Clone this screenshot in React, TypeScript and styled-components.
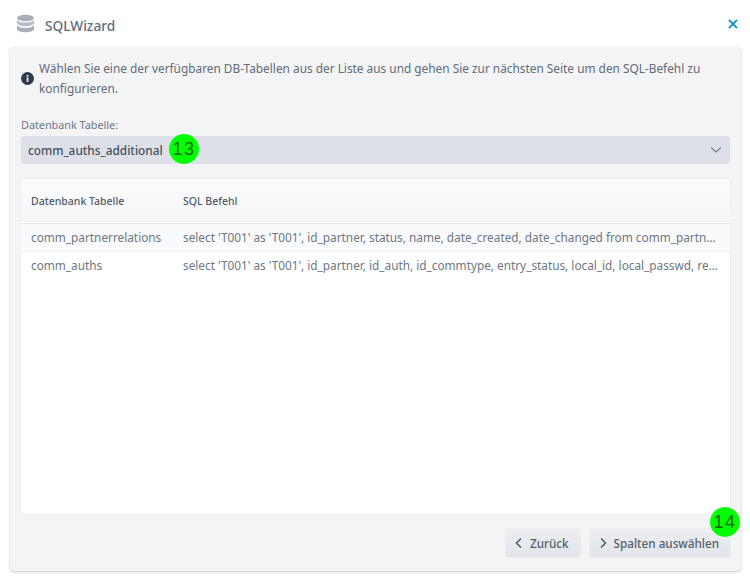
import React from "react";
import styled, { createGlobalStyle } from "styled-components";

const Global = createGlobalStyle`
  html, body { margin: 0; padding: 0; background: #fff; }
  body { font-family: "Noto Sans", "Open Sans", sans-serif; color: #4b5563; }
`;
const Page = styled.div`
  width: 750px; height: 576px; display: flex; flex-direction: column; overflow: hidden; box-sizing: border-box; position: relative;
`;
const Header = styled.header`
  height: 47px; display: flex; align-items: center; padding: 2px 11px 0 16px; box-sizing: border-box; flex: none;
`;
const AppIcon = styled.svg`
  width: 19px; height: 20px; flex: none; margin-top: -2px;
`;
const Title = styled.h1`
  margin: 1px 0 0 10px; font-size: 13.7px; font-weight: 500; color: #626b79; flex: 1;
`;
const CloseBtn = styled.button`
  border: 0; background: none; padding: 0; width: 12px; height: 12px; display: flex; color: #1a93c4; margin-top: -2px;
`;
const Panel = styled.main`
  margin: 0 9px 0 10px; height: 524px; background: #f3f4f6; border-radius: 4px;
  box-shadow: 0 1px 3px rgba(0,0,0,.22); padding: 11px 11px 14px; box-sizing: border-box; display: flex; flex-direction: column;
`;
const Info = styled.div`
  display: flex; align-items: center; gap: 5px; font-size: 11.85px; line-height: 20px; color: #626b78;
`;
const InfoIcon = styled.svg`
  width: 13px; height: 13px; flex: none; margin-top: 1px;
`;
const FieldLabel = styled.label`
  display: block; margin-top: 19px; font-size: 10.8px; line-height: 15px; color: #6d7686;
`;
const Select = styled.div`
  margin-top: 4px; height: 28px; background: #dde1e7; border-radius: 4px; display: flex; align-items: center; justify-content: space-between;
  padding: 0 8px 0 7px; font-size: 11.85px; font-weight: 500; color: #465060; flex: none;
`;
const SelectChevron = styled.span`
  display: flex; color: #7b8491;
`;
const TableCard = styled.div`
  margin-top: 15px; height: 335px; background: #fff; border-radius: 4px; box-shadow: 0 0 2px rgba(0,0,0,.08); overflow: hidden; flex: none;
`;
const Table = styled.table`
  width: 100%; border-collapse: collapse; table-layout: fixed; font-size: 11.8px;
`;
const HeadRow = styled.tr`
  height: 44px; background: linear-gradient(#fcfcfd, #f5f6f8); border-bottom: 1px solid #e5e7eb;
`;
const Th = styled.th<{ $w?: number }>`
  ${p => (p.$w ? `width: ${p.$w}px;` : "")}
  font-weight: 500; font-size: 10.5px; text-align: left; padding: 0 10px; color: #525b69;
`;
const Row = styled.tr<{ $alt?: boolean }>`
  height: 28px; background: ${p => (p.$alt ? "#f9fafb" : "#fff")}; border-bottom: ${p => (p.$alt ? "1px solid #eef0f2" : "0")};
`;
const Td = styled.td`
  padding: 0 10px; color: #6e7784; white-space: nowrap; overflow: hidden; text-overflow: ellipsis;
`;
const Footer = styled.footer`
  margin-top: 15px; display: flex; justify-content: flex-end; gap: 10px;
`;
const Btn = styled.button`
  height: 28px; display: flex; align-items: center; gap: 5px; padding: 0 11px 0 7px; border: 0; border-radius: 4px;
  background: linear-gradient(#eceef1, #e1e4e9); box-shadow: 0 0 1px rgba(0,0,0,.3);
  font: 500 11.7px "Noto Sans", sans-serif; color: #565f6d;
`;
const Badge = styled.span<{ $x: number; $y: number }>`
  position: absolute; left: ${p => p.$x}px; top: ${p => p.$y}px; width: 30px; height: 30px; border-radius: 50%;
  background: #00ff00; color: #0f6a0f; font: 18px/30px "Liberation Sans", sans-serif; text-align: center; letter-spacing: 1.5px;
`;

const Chevron = ({ d, w = 1.4 }: { d: string; w?: number }) => (
  <svg width="12" height="12" viewBox="0 0 12 12" fill="none" stroke="currentColor" strokeWidth={w} strokeLinecap="round" strokeLinejoin="round"><path d={d} /></svg>
);

export default function App() {
  return (
    <Page>
      <Global />
      <Header>
        <AppIcon viewBox="0 0 19 20">
          <ellipse cx="9.5" cy="4" rx="8.5" ry="3.2" fill="#a9aeb8" />
          <path d="M1 6v3c0 1.8 3.8 3.2 8.5 3.2S18 10.800 18 9V6c-1.500 1.700-4.800 2.500-8.500 2.500S2.500 7.700 1 6z" fill="#b9bec6" />
          <path d="M1 11.500v3.500c0 1.800 3.800 3.200 8.500 3.200S18 16.800 18 15v-3.500c-1.500 1.700-4.800 2.500-8.500 2.500S2.500 13.200 1 11.500z" fill="#a9aeb8" />
        </AppIcon>
        <Title>SQLWizard</Title>
        <CloseBtn aria-label="Schließen">
          <svg width="12" height="12" viewBox="0 0 12 12" fill="none" stroke="currentColor" strokeWidth="1.8"><path d="M2 2l8 8M10 2l-8 8" /></svg>
        </CloseBtn>
      </Header>
      <Panel>
        <Info>
          <InfoIcon viewBox="0 0 13 13">
            <circle cx="6.5" cy="6.5" r="6.500" fill="#2f3a4d" />
            <rect x="5.700" y="5.500" width="1.700" height="4.300" fill="#fff" />
            <rect x="5.700" y="3" width="1.700" height="1.600" fill="#fff" />
          </InfoIcon>
          <span>Wählen Sie eine der verfügbaren DB-Tabellen aus der Liste aus und gehen Sie zur nächsten Seite um den SQL-Befehl zu konfigurieren.</span>
        </Info>
        <FieldLabel>Datenbank Tabelle:</FieldLabel>
        <Select>
          <span>comm_auths_additional</span>
          <SelectChevron><Chevron d="M1.500 4l4.500 4 4.500-4" w={1.2} /></SelectChevron>
        </Select>
        <TableCard>
          <Table>
            <thead>
              <HeadRow><Th $w={132}>Datenbank Tabelle</Th><Th>SQL Befehl</Th></HeadRow>
            </thead>
            <tbody>
              <Row $alt><Td>comm_partnerrelations</Td><Td>select 'T001' as 'T001', id_partner, status, name, date_created, date_changed from comm_partnerrelations</Td></Row>
              <Row><Td>comm_auths</Td><Td>select 'T001' as 'T001', id_partner, id_auth, id_commtype, entry_status, local_id, local_passwd, remote_id</Td></Row>
            </tbody>
          </Table>
        </TableCard>
        <Footer>
          <Btn><Chevron d="M7.500 2l-4 4 4 4" w={1.7} />Zurück</Btn>
          <Btn><Chevron d="M4.500 2l4 4-4 4" w={1.7} />Spalten auswählen</Btn>
        </Footer>
      </Panel>
      <Badge $x={169} $y={134}>13</Badge>
      <Badge $x={710} $y={507}>14</Badge>
    </Page>
  );
}
